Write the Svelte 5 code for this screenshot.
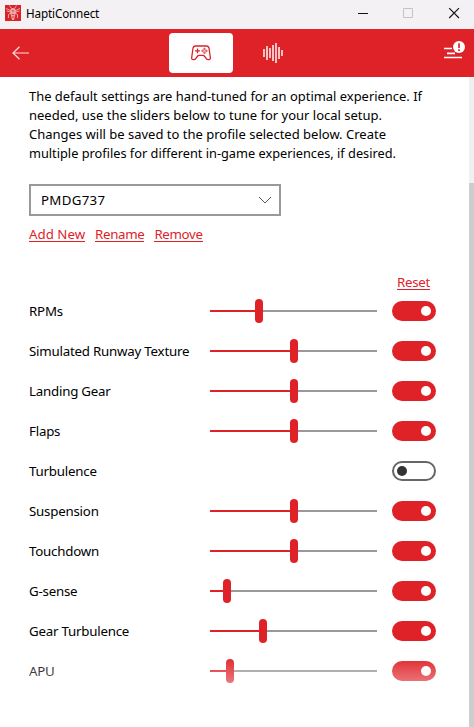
<script>
  let profile = 'PMDG737'
  const intro = [
    { text: 'The default settings are hand-tuned for an optimal experience. If', width: 393 },
    { text: 'needed, use the sliders below to tune for your local setup.', width: 353 },
    { text: 'Changes will be saved to the profile selected below. Create', width: 357 },
    { text: 'multiple profiles for different in-game experiences, if desired.', width: 367 }
  ]
  // value is the thumb centre in pixels along the 167px track
  let effects = [
    { name: 'RPMs', value: 49, on: true },
    { name: 'Simulated Runway Texture', value: 84, on: true },
    { name: 'Landing Gear', value: 84, on: true },
    { name: 'Flaps', value: 84, on: true },
    { name: 'Turbulence', value: 84, on: false },
    { name: 'Suspension', value: 84, on: true },
    { name: 'Touchdown', value: 84, on: true },
    { name: 'G-sense', value: 17, on: true },
    { name: 'Gear Turbulence', value: 53, on: true },
    { name: 'APU', value: 20, on: true }
  ]
  function toggle (i) {
    effects[i].on = !effects[i].on
  }
</script>

<div class="window">
  <div class="titlebar">
    <svg class="logo" width="16" height="16" viewBox="0 0 16 16">
      <rect width="16" height="16" fill="#d92329" />
      <path d="M5.500 4H10.500L11 7L10 11L9 15H7L6 11L5 7Z" fill="#f0a3a6" />
      <g fill="none" stroke="#f3b4b6" stroke-width=".9">
        <path d="M4.500 .5L6.500 3.500H9.500L11.500 .5M1 3.500L5.500 5.500M15 3.500L10.500 5.500M1.500 6L5.500 7M14.500 6L10.500 7M3.500 13V9.500L6 8M12.500 13V9.500L10 8" />
      </g>
      <path d="M8 5V7M6.800 9.500H9.200M8 11V13" stroke="#d92329" stroke-width=".8" />
    </svg>
    <span class="app-name">HaptiConnect</span>
    <svg class="controls" width="110" height="29" viewBox="0 0 110 29" fill="none">
      <path d="M0 13.500H10" stroke="#111" />
      <rect x="45.500" y="8.500" width="9" height="9" rx=".5" stroke="#c3c3c3" />
      <path d="M91.200 8.200L101 18M101 8.200L91.200 18" stroke="#111" stroke-width="1.100" />
    </svg>
  </div>

  <div class="header">
    <svg class="back" width="18" height="14" viewBox="0 0 18 14" fill="none" stroke="#fbdcdd" stroke-width="1.200">
      <path d="M7.500 .7L1 7L7.500 13.300M1 7H17" />
    </svg>
    <div class="tab active">
      <svg width="20" height="16" viewBox="0 0 20 16" fill="none" stroke="#d92329" stroke-width="1.300">
        <path d="M4.500 1H15.500Q17.500 1 18 3L19.300 12.500Q19.500 14.700 17.700 14.700H17Q16 14.700 15.300 13.700L13.300 11Q12.800 10.300 12 10.300H8Q7.200 10.300 6.700 11L4.700 13.700Q4 14.700 3 14.700H2.300Q.5 14.700 .7 12.500L2 3Q2.500 1 4.500 1Z" />
        <path d="M6.500 3.500V8.300M4.100 5.900H8.900" />
        <g stroke-width=".9">
          <circle cx="13.500" cy="4" r=".8" />
          <circle cx="13.500" cy="7.800" r=".8" />
          <circle cx="11.600" cy="5.900" r=".8" />
          <circle cx="15.400" cy="5.900" r=".8" />
        </g>
      </svg>
    </div>
    <div class="tab">
      <svg width="20" height="20" viewBox="0 0 20 20" fill="none" stroke="#f9cbcd" stroke-width="1.900">
        <path d="M1 6V14M4 3V17M7 5V15M10 2V18M13 0V20M16 4V16M19 7V13" />
      </svg>
    </div>
    <svg class="menu" width="22" height="20" viewBox="0 0 22 20">
      <path d="M0 7.500H8M3 12.300H11M0 16.500H18" stroke="#fff" stroke-width="1.700" />
      <circle cx="15" cy="6" r="6.600" fill="#d92329" opacity=".6" />
      <circle cx="15" cy="6" r="6" fill="#fff" />
      <path d="M15 2.300V7M15 8.200V10" stroke="#df2228" stroke-width="1.700" />
    </svg>
  </div>

  <div class="content">
    <div class="page">
      <div class="intro">
        {#each intro as line}
          <svg height="19" width="407"><text x="0" y="14" textLength={line.width} lengthAdjust="spacingAndGlyphs">{line.text}</text></svg>
        {/each}
      </div>

      <div class="profile">
        <span>{profile}</span>
        <svg width="14" height="8" viewBox="0 0 14 8" fill="none" stroke="#555" stroke-width="1">
          <path d="M1 1L7 7L13 1" />
        </svg>
      </div>
      <div class="links">
        <a href="#add">Add New</a>
        <a href="#rename">Rename</a>
        <a href="#remove">Remove</a>
      </div>

      <div class="reset"><a href="#reset">Reset</a></div>
      <div class="effects">
        {#each effects as effect, i}
          <div class="row">
            <span class="label">{effect.name}</span>
            {#if effect.on}
              <div class="slider">
                <div class="fill" style="width: {effect.value}px"></div>
                <div class="thumb" style="left: {effect.value - 4}px"></div>
              </div>
            {/if}
            <button class="switch" class:on={effect.on} aria-label={effect.name} on:click={() => toggle(i)}>
              <span class="knob"></span>
            </button>
          </div>
        {/each}
      </div>
      <div class="fade"></div>
    </div>
    <div class="scrollbar"><div class="scroll-thumb"></div></div>
  </div>
</div>

<style>
  :global(body) {
    background: #fff;
    overflow: hidden;
  }
  .window {
    display: flex;
    flex-direction: column;
    width: 474px;
    height: 727px;
    font-family: "Noto Sans", "Open Sans", sans-serif;
    font-size: 13.3px;
    color: #000;
  }
  .titlebar {
    display: flex;
    align-items: center;
    height: 29px;
    padding-left: 5px;
    background: #f3f1f3;
  }
  .logo {
    margin-bottom: 3px;
  }
  .app-name {
    margin: -3px 0 0 5px;
    font-size: 11.7px;
    letter-spacing: -0.15px;
  }
  .controls {
    margin-left: auto;
    margin-right: 6px;
  }
  .header {
    display: flex;
    align-items: center;
    height: 48px;
    background: #df2228;
  }
  .back {
    margin-left: 12px;
  }
  .tab {
    display: flex;
    align-items: center;
    justify-content: center;
    width: 64px;
    height: 40px;
    border-radius: 4px;
    margin-left: 8px;
  }
  .tab.active {
    margin-left: 139px;
    background: #fff;
  }
  .menu {
    margin: -5px 8px 0 auto;
  }
  .content {
    display: flex;
    flex: 1;
    min-height: 0;
  }
  .page {
    position: relative;
    flex: 1;
    padding: 10px 33px 0 29px;
  }
  .intro {
    display: flex;
    flex-direction: column;
  }
  .intro svg {
    overflow: visible;
  }
  .profile {
    display: flex;
    align-items: center;
    justify-content: space-between;
    box-sizing: border-box;
    width: 252px;
    height: 32px;
    margin-top: 21px;
    padding: 0 7px 0 10px;
    border: 2px solid #999;
    letter-spacing: 0.3px;
  }
  .links {
    display: flex;
    gap: 10px;
    height: 20px;
    line-height: 20px;
    margin-top: 8px;
  }
  a {
    color: #df2228;
    text-decoration: none;
    height: 17px;
    line-height: 20px;
    border-bottom: 1px solid #df2228;
  }
  .links a + a {
    letter-spacing: -0.35px;
  }
  .reset {
    display: flex;
    justify-content: flex-end;
    height: 19px;
    margin: 28px 6px 0 0;
    letter-spacing: -0.3px;
  }
  .row {
    display: flex;
    align-items: center;
    height: 40px;
  }
  .label {
    width: 181px;
    letter-spacing: -0.22px;
    white-space: nowrap;
  }
  .slider {
    position: relative;
    width: 167px;
    height: 2px;
    background: #999;
  }
  .fill {
    height: 2px;
    background: #df2228;
  }
  .thumb {
    position: absolute;
    top: -11px;
    width: 8px;
    height: 24px;
    border-radius: 4px;
    background: #df2228;
  }
  .switch {
    display: flex;
    align-items: center;
    box-sizing: border-box;
    width: 44px;
    height: 20px;
    margin-left: auto;
    padding: 0 3px;
    border: 2px solid #666;
    border-radius: 10px;
    background: #fff;
  }
  .switch.on {
    justify-content: flex-end;
    border-color: #df2228;
    background: #df2228;
  }
  .knob {
    width: 10px;
    height: 10px;
    border-radius: 5px;
    background: #333;
  }
  .on .knob {
    background: #fff;
  }
  .fade {
    position: absolute;
    left: 0;
    right: 0;
    bottom: 0;
    height: 72px;
    background: linear-gradient(rgba(255, 255, 255, 0), #fff);
    pointer-events: none;
  }
  .scrollbar {
    width: 5px;
    padding-top: 106px;
    background: #f0f0f0;
  }
  .scroll-thumb {
    height: 544px;
    background: #cdcdcd;
  }
</style>
